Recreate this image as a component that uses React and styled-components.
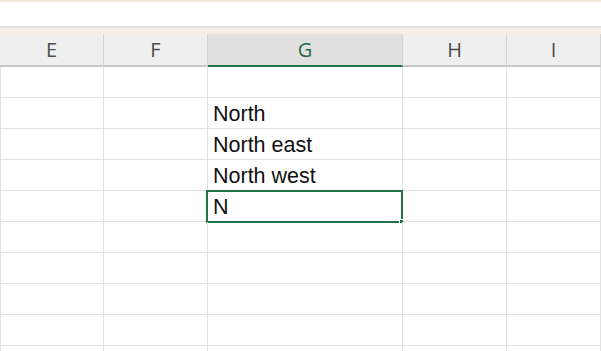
import React from 'react';
import styled, { createGlobalStyle } from 'styled-components';

const Global = createGlobalStyle`
  html, body {
    margin: 0;
    padding: 0;
    background: #ffffff;
    overflow: hidden;
  }
`;

const Sheet = styled.div`
  width: 601px;
  height: 351px;
  overflow: hidden;
  display: flex;
  flex-direction: column;
  font-family: "Liberation Sans", Arial, sans-serif;
  background: #fff;
`;

const TopStrip = styled.div`
  height: 2px;
  background: #eee8df;
  flex-shrink: 0;
`;

const FormulaBand = styled.div`
  height: 24px;
  background: #ffffff;
  border-bottom: 2px solid #e3e3e3;
  flex-shrink: 0;
`;

const Ribbon = styled.div`
  height: 6px;
  background: #f3ede5;
  flex-shrink: 0;
`;

const cols = '104px 104px 195px 104px 1fr';

const HeaderRow = styled.div`
  display: grid;
  grid-template-columns: ${cols};
  height: 33px;
  flex-shrink: 0;
`;

const HeaderCell = styled.div`
  display: flex;
  align-items: center;
  justify-content: center;
  font-family: "Open Sans", "Noto Sans", sans-serif;
  font-size: 20px;
  color: ${p => (p.$active ? '#1e6e42' : '#4c4c4c')};
  background: ${p => (p.$active ? '#e0e0e0' : '#efefef')};
  border-right: 1px solid #d4d4d4;
  border-bottom: 2px solid ${p => (p.$active ? '#217346' : '#c6c6c6')};
  box-sizing: border-box;
  padding-bottom: 1px;
`;

const Row = styled.div`
  display: grid;
  grid-template-columns: ${cols};
  height: 31px;
  flex-shrink: 0;
`;

const Cell = styled.div`
  position: relative;
  box-sizing: border-box;
  border-right: 1px solid #e1e1e1;
  border-bottom: 1px solid #e1e1e1;
  border-left: ${p => (p.$first ? '1px solid #e1e1e1' : 'none')};
  display: flex;
  align-items: center;
  padding-left: 5px;
  padding-top: 2px;
  font-size: 21.5px;
  color: #111;
  white-space: nowrap;
`;

const Selection = styled.div`
  position: absolute;
  left: -2px;
  top: -1px;
  right: -1px;
  bottom: -2px;
  border: 2px solid #217346;
  pointer-events: none;
`;

const Handle = styled.div`
  position: absolute;
  right: -3px;
  bottom: -3px;
  width: 5px;
  height: 5px;
  background: #217346;
  border: 1px solid #fff;
  box-sizing: border-box;
`;

const headers = ['E', 'F', 'G', 'H', 'I'];
const values = ['', 'North', 'North east', 'North west', 'N', '', '', '', '', ''];
const activeRow = 4;

export default function App() {
  return (
    <Sheet>
      <Global />
      <TopStrip />
      <FormulaBand />
      <Ribbon />
      <HeaderRow>
        {headers.map(h => (
          <HeaderCell key={h} $active={h === 'G'}>{h}</HeaderCell>
        ))}
      </HeaderRow>
      {values.map((v, r) => (
        <Row key={r}>
          {headers.map((h, c) => (
            <Cell key={h} $first={c === 0}>
              {h === 'G' ? v : ''}
              {h === 'G' && r === activeRow && (
                <Selection>
                  <Handle />
                </Selection>
              )}
            </Cell>
          ))}
        </Row>
      ))}
    </Sheet>
  );
}
